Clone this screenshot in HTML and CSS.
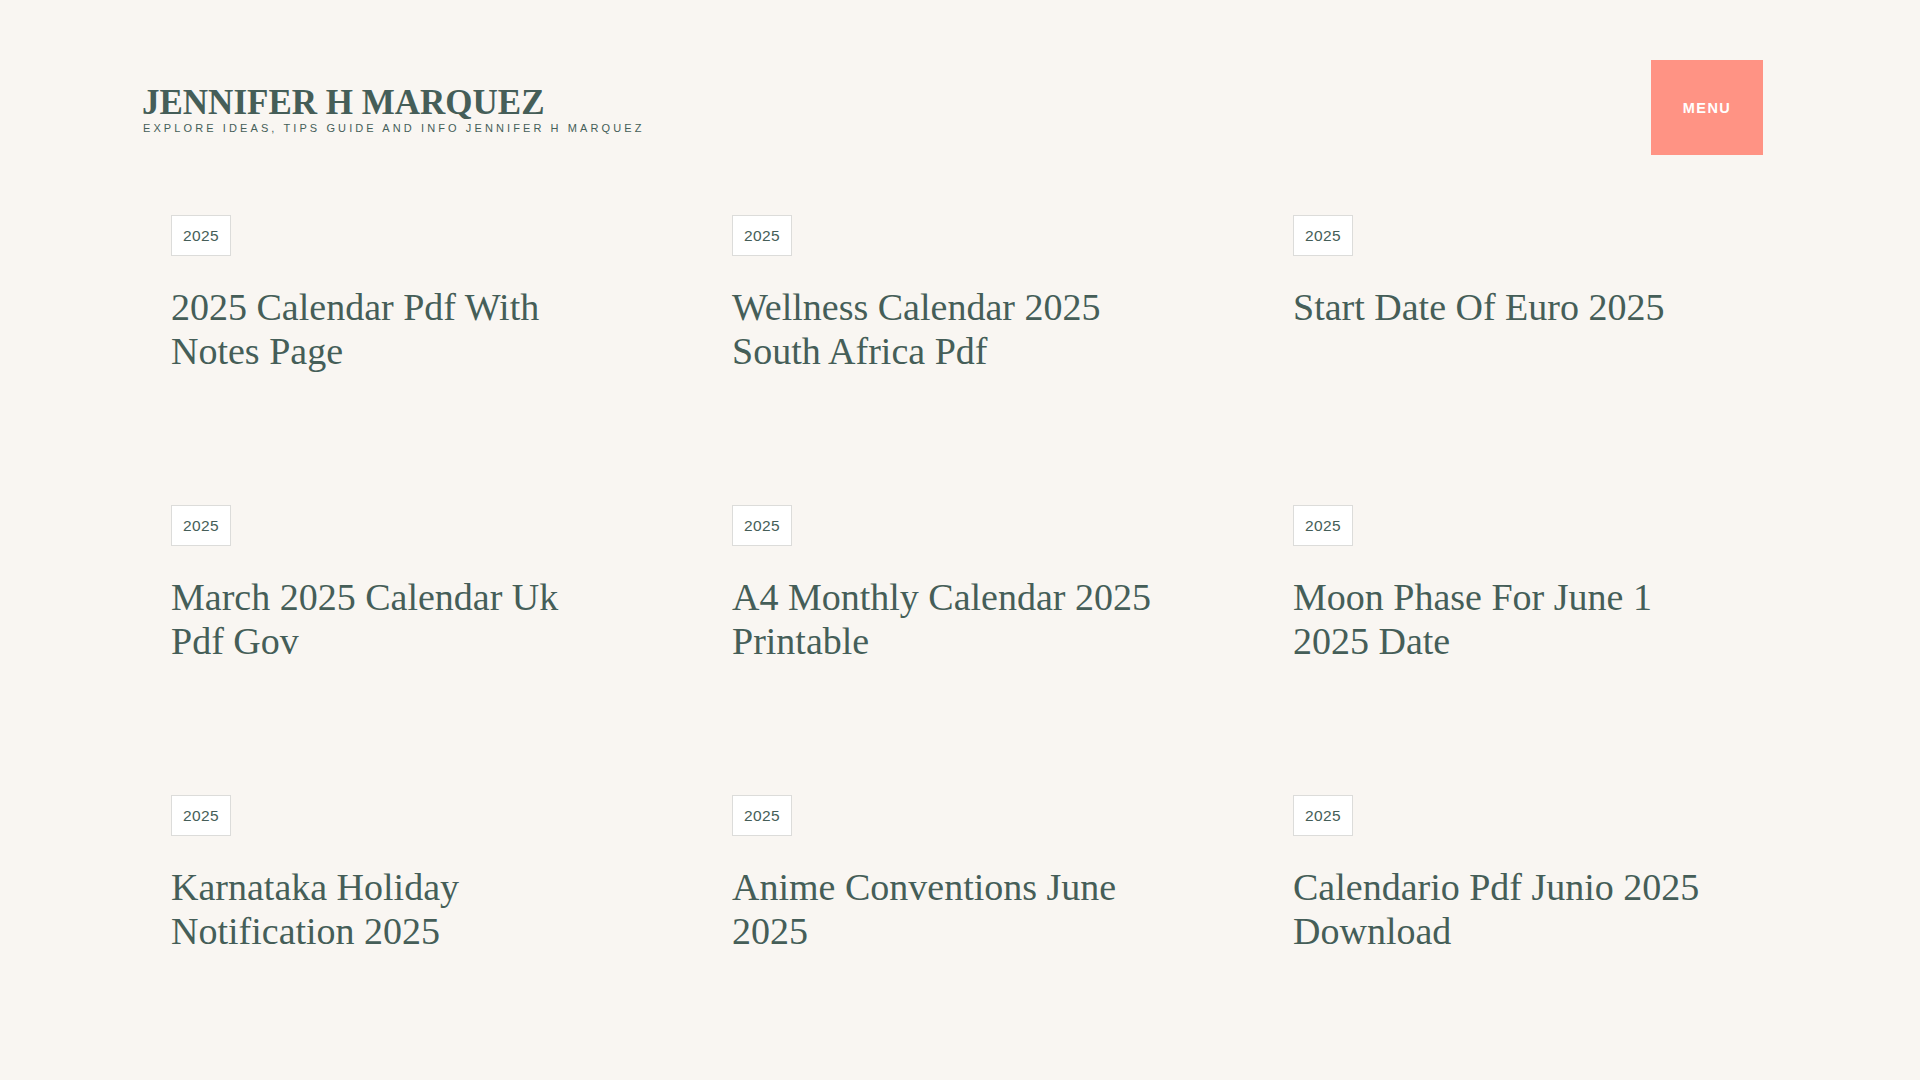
FILE: index.html
```html
<!DOCTYPE html>
<html lang="en">
<head>
<meta charset="utf-8">
<title>Jennifer H Marquez</title>
<link rel="stylesheet" href="styles.css">
</head>
<body>
<div class="page">
  <header class="site-header">
    <div class="branding">
      <h1 class="site-title">JENNIFER H MARQUEZ</h1>
      <p class="site-desc">EXPLORE IDEAS, TIPS GUIDE AND INFO JENNIFER H MARQUEZ</p>
    </div>
    <button class="menu-btn">MENU</button>
  </header>
  <main class="grid">
    <article class="card"><span class="tag">2025</span><h2 class="card-title">2025 Calendar Pdf With Notes Page</h2></article>
    <article class="card"><span class="tag">2025</span><h2 class="card-title">Wellness Calendar 2025 South Africa Pdf</h2></article>
    <article class="card"><span class="tag">2025</span><h2 class="card-title">Start Date Of Euro 2025</h2></article>
    <article class="card"><span class="tag">2025</span><h2 class="card-title">March 2025 Calendar Uk Pdf Gov</h2></article>
    <article class="card"><span class="tag">2025</span><h2 class="card-title">A4 Monthly Calendar 2025 Printable</h2></article>
    <article class="card"><span class="tag">2025</span><h2 class="card-title">Moon Phase For June 1 2025 Date</h2></article>
    <article class="card"><span class="tag">2025</span><h2 class="card-title">Karnataka Holiday Notification 2025</h2></article>
    <article class="card"><span class="tag">2025</span><h2 class="card-title">Anime Conventions June 2025</h2></article>
    <article class="card"><span class="tag">2025</span><h2 class="card-title">Calendario Pdf Junio 2025 Download</h2></article>
  </main>
</div>
</body>
</html>
```

FILE: styles.css
```css
html, body {
  margin: 0;
  padding: 0;
  background: #f9f6f2;
}
body {
  color: #455e58;
  font-family: "Liberation Serif", "Times New Roman", serif;
  padding-right: 15px;
}
.page {
  max-width: 1621px;
  margin: 0 auto;
}
.site-header {
  display: flex;
  justify-content: space-between;
  align-items: flex-start;
  padding-top: 60px;
}
.branding {
  margin-top: 24px;
}
.site-title {
  margin: 0;
  font-family: "Liberation Serif", "Times New Roman", serif;
  font-weight: 700;
  font-size: 35px;
  line-height: 38px;
  color: #455e58;
}
.site-desc {
  margin: -1px 0 0 1px;
  font-family: "Liberation Sans", Arial, sans-serif;
  font-size: 11px;
  line-height: 14px;
  letter-spacing: 3.1px;
  color: #455e58;
}
.menu-btn {
  width: 112px;
  height: 95px;
  border: 0;
  padding: 0;
  background: #ff9384;
  color: #ffffff;
  font-family: "Liberation Sans", Arial, sans-serif;
  font-weight: 700;
  font-size: 14.5px;
  letter-spacing: 1.5px;
  cursor: pointer;
}
.grid {
  display: grid;
  grid-template-columns: repeat(3, 1fr);
  column-gap: 62px;
  grid-auto-rows: 290px;
  margin-top: 31px;
  padding-bottom: 40px;
}
.card {
  padding: 29px 29px;
}
.tag {
  display: inline-block;
  box-sizing: border-box;
  height: 41px;
  line-height: 39px;
  padding: 0 11px;
  border: 1px solid #dcdcda;
  background: #ffffff;
  font-family: "Liberation Sans", Arial, sans-serif;
  font-size: 15.5px;
  letter-spacing: 0.4px;
  color: #455e58;
  vertical-align: top;
}
.card-title {
  margin: 29px 0 0 0;
  font-family: "Liberation Serif", "Times New Roman", serif;
  font-weight: 400;
  font-size: 38px;
  line-height: 44px;
  color: #455e58;
}
```
